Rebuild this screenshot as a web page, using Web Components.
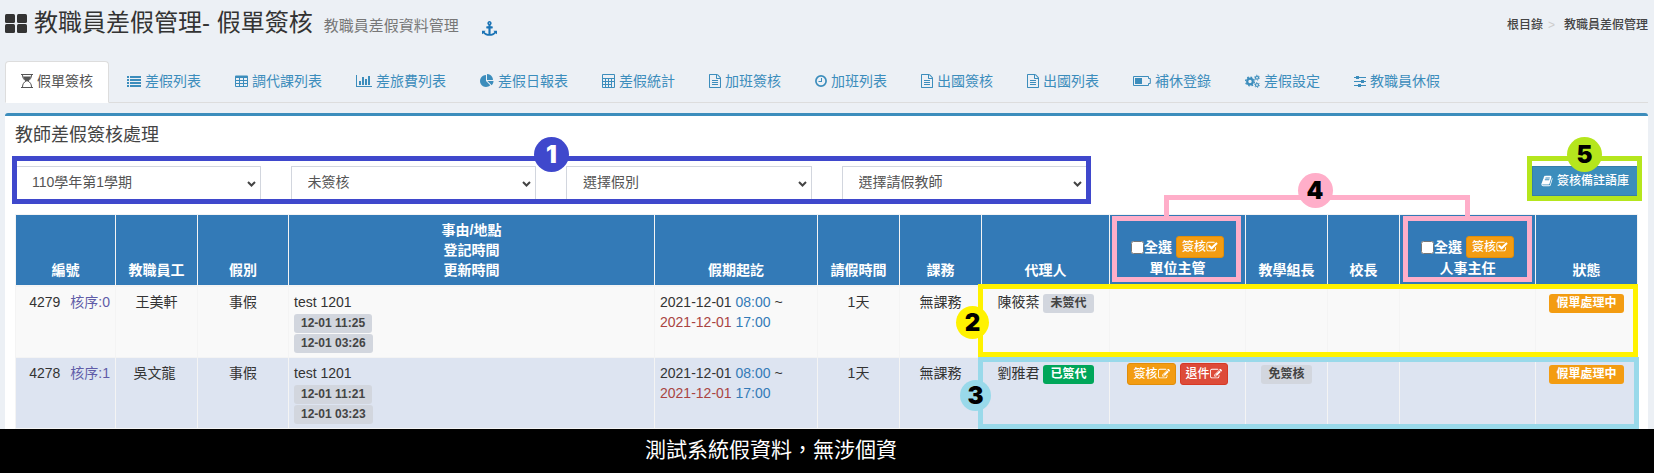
<!DOCTYPE html>
<html lang="zh-Hant">
<head>
<meta charset="utf-8">
<title>教職員差假管理 - 假單簽核</title>
<style>
  html, body { margin: 0; }
  body {
    background: #ecf0f5;
    color: #333;
    font: 14px/20px "Liberation Sans", "Noto Sans CJK TC", sans-serif;
  }
</style>
</head>
<body>
<leave-app></leave-app>
<script>
const define = (name, html, setup) => {
  const template = document.createElement('template');
  template.innerHTML = html;
  customElements.define(name, class extends HTMLElement {
    connectedCallback() {
      if (this.shadowRoot) return;
      const root = this.attachShadow({ mode: 'open' });
      root.append(template.content.cloneNode(true));
      if (setup) setup(this, root);
    }
  });
};

/* name: [width, height, markup] */
const ICONS = {
  grid: [22, 19, '<rect width="10" height="9" rx="1.5"/><rect x="12" width="10" height="9" rx="1.5"/><rect y="10" width="10" height="9" rx="1.5"/><rect x="12" y="10" width="10" height="9" rx="1.5"/>'],
  anchor: [1792, 1792, '<path d="M960 256q0-26-19-45t-45-19-45 19-19 45 19 45 45 19 45-19 19-45zm832 928v352q0 22-20 30-8 2-12 2-12 0-23-9l-93-93q-119 143-318.5 226.5t-429.5 83.5-429.5-83.5-318.5-226.5l-93 93q-9 9-23 9-4 0-12-2-20-8-20-30v-352q0-14 9-23t23-9h352q22 0 30 20 8 19-7 35l-100 100q67 91 189.5 153.5t271.5 82.5v-647h-192q-26 0-45-19t-19-45v-128q0-26 19-45t45-19h192v-163q-58-34-93-92.5t-35-128.5q0-106 75-181t181-75 181 75 75 181q0 70-35 128.5t-93 92.5v163h192q26 0 45 19t19 45v128q0 26-19 45t-45 19h-192v647q149-20 271.5-82.5t189.5-153.5l-100-100q-15-16-7-35 8-20 30-20h352q14 0 23 9t9 23z"/>'],
  hourglass: [12, 14, '<path d="M0 0h12v1H0zM0 13h12v1H0z"/><path d="M1.500 1c0 3 1.500 4.800 3.500 6c-2 1.200-3.500 3-3.500 6M10.500 1c0 3-1.500 4.800-3.500 6c2 1.200 3.500 3 3.500 6" fill="none" stroke="currentColor"/><path d="M2 2.500h8C9.400 4.500 8 6 6.500 7.500h-1C4 6 2.600 4.500 2 2.500z"/>'],
  list: [14, 14, '<path d="M0 2h2v2H0zM3 2h11v2H3zM0 5h2v2H0zM3 5h11v2H3zM0 8h2v2H0zM3 8h11v2H3zM0 11h2v2H0zM3 11h11v2H3z"/>'],
  table: [13, 14, '<path fill-rule="evenodd" d="M1 1.500h11a1 1 0 0 1 1 1V12a1 1 0 0 1-1 1H1a1 1 0 0 1-1-1V2.500a1 1 0 0 1 1-1zM1 4v2h3V4zM5 4v2h3V4zM9 4v2h3V4zM1 7v2h3V7zM5 7v2h3V7zM9 7v2h3V7zM1 10v2h3v-2zM5 10v2h3v-2zM9 10v2h3v-2z"/>'],
  chart: [16, 14, '<path d="M0 1h1v11h15v1H0zM3 7h2v4H3zM6 3h2v8H6zM9 5h2v6H9zM12 2h2v9h-2z"/>'],
  pie: [14, 14, '<path transform="scale(.0078125)" d="M768 890l546 546q-106 108-247.500 168t-298.500 60q-209 0-385.500-103t-279.500-279.500-103-385.500 103-385.500 279.500-279.500 385.500-103v762zm187 6h773q0 157-60 298.500t-168 247.500zm709-128h-768v-768q209 0 385.500 103t279.500 279.500 103 385.500z"/>'],
  calculator: [13, 14, '<path fill-rule="evenodd" d="M1 0h11a1 1 0 0 1 1 1v12a1 1 0 0 1-1 1H1a1 1 0 0 1-1-1V1a1 1 0 0 1 1-1zM1 1v3h11V1zM1 5v2h2V5zM4 5v2h2V5zM7 5v2h2V5zM10 5v2h2V5zM1 8v2h2V8zM4 8v2h2V8zM7 8v2h2V8zM10 8v5h2V8zM1 11v2h2v-2zM4 11v2h2v-2zM7 11v2h2v-2z"/>'],
  file: [12, 14, '<path transform="scale(.0078125) translate(-128)" d="M1596 380q28 28 48 76t20 88v1152q0 40-28 68t-68 28h-1344q-40 0-68-28t-28-68v-1600q0-40 28-68t68-28h896q40 0 88 20t76 48zm-444-244v376h376q-10-29-22-41l-313-313q-12-12-41-22zm384 1528v-1024h-416q-40 0-68-28t-28-68v-416h-768v1536h1280zm-1024-864q0-14 9-23t23-9h704q14 0 23 9t9 23v64q0 14-9 23t-23 9h-704q-14 0-23-9t-9-23v-64zm736 224q14 0 23 9t9 23v64q0 14-9 23t-23 9h-704q-14 0-23-9t-9-23v-64q0-14 9-23t23-9h704zm0 256q14 0 23 9t9 23v64q0 14-9 23t-23 9h-704q-14 0-23-9t-9-23v-64q0-14 9-23t23-9h704z"/>'],
  clock: [12, 14, '<circle cx="6" cy="7" r="5.100" fill="none" stroke="currentColor" stroke-width="1.700"/><path d="M6 4h1v4H3.500V7H6z"/>'],
  battery: [18, 14, '<path d="M.5 2.500h15v2h1.800v5h-1.800v2H.5z" fill="none" stroke="currentColor"/><path d="M2 4h7v6H2z"/>'],
  cogs: [15, 14, '<circle cx="5" cy="7.500" r="2.800" fill="none" stroke="currentColor" stroke-width="2.200"/><circle cx="5" cy="7.500" r="4.400" fill="none" stroke="currentColor" stroke-width="1.300" stroke-dasharray="1.730 1.726"/><circle cx="12" cy="3.700" r="1.500" fill="none" stroke="currentColor" stroke-width="1.200"/><circle cx="12" cy="3.700" r="2.500" fill="none" stroke="currentColor" stroke-width=".8" stroke-dasharray="1.200 1.420"/><circle cx="12" cy="11" r="1.500" fill="none" stroke="currentColor" stroke-width="1.200"/><circle cx="12" cy="11" r="2.500" fill="none" stroke="currentColor" stroke-width=".8" stroke-dasharray="1.200 1.420"/>'],
  sliders: [12, 14, '<path d="M0 3h12v1H0zM0 7h12v1H0zM0 11h12v1H0zM2 2h3v3H2zM7 6h3v3H7zM4 10h3v3H4z"/>'],
  book: [1792, 1792, '<path d="M1703 478q40 57 18 129l-275 906q-19 64-76.500 107.500t-122.500 43.500h-923q-77 0-148.500-53.500t-99.500-131.500q-24-67-2-127 0-4 3-27t4-37q1-8-3-21.500t-3-19.500q2-11 8-21t16.500-23.500 16.500-23.500q23-38 45-91.500t30-91.500q3-10 .5-30t-.5-28q3-11 17-28t17-23q21-36 42-92t25-90q1-9-2.500-32t.5-28q4-13 22-30.500t22-22.500q19-26 42.500-84.500t27.500-96.500q1-8-3-25.500t-2-26.500q2-8 9-18t18-23 17-21q8-12 16.500-30.500t15-35 16-36 19.500-32 26.500-23.500 36-11.500 47.500 5.500l-1 3q38-9 51-9h761q74 0 114 56t18 130l-274 906q-36 119-71.500 153.500t-128.500 34.500h-869q-27 0-38 15-11 16-1 43 24 70 144 70h923q29 0 56-15.500t35-41.500l300-987q7-22 5-57 38 15 59 43zm-1064 2q-4 13 2 22.500t20 9.500h608q13 0 25.500-9.500t16.500-22.500l21-64q4-13-2-22.500t-20-9.500h-608q-13 0-25.500 9.500t-16.500 22.500zm-83 256q-4 13 2 22.500t20 9.500h608q13 0 25.500-9.500t16.500-22.500l21-64q4-13-2-22.500t-20-9.500h-608q-13 0-25.500 9.500t-16.500 22.500z"/>'],
  check: [1664, 1792, '<path transform="translate(-64)" d="M1472 930v318q0 119-84.500 203.500t-203.500 84.500h-832q-119 0-203.500-84.500t-84.500-203.500v-832q0-119 84.500-203.500t203.500-84.500h832q63 0 117 25 15 7 18 23 3 17-9 29l-49 49q-10 10-23 10-3 0-9-2-23-6-45-6h-832q-66 0-113 47t-47 113v832q0 66 47 113t113 47h832q66 0 113-47t47-113v-254q0-13 9-22l64-64q10-10 23-10 6 0 12 3 20 8 20 29zm231-489l-814 814q-24 24-57 24t-57-24l-430-430q-24-24-24-57t24-57l110-110q24-24 57-24t57 24l263 263 647-647q24-24 57-24t57 24l110 110q24 24 24 57t-24 57z"/>'],
  edit: [1792, 1792, '<path d="M888 1184l116-116-152-152-116 116v56h96v96h56zm440-720q-16-16-33 1l-350 350q-17 17-1 33t33-1l350-350q17-17 1-33zm80 594v190q0 119-84.500 203.500t-203.500 84.500h-832q-119 0-203.500-84.500t-84.500-203.500v-832q0-119 84.500-203.500t203.500-84.500h832q63 0 117 25 15 7 18 23 3 17-9 29l-49 49q-14 14-32 8-23-6-45-6h-832q-66 0-113 47t-47 113v832q0 66 47 113t113 47h832q66 0 113-47t47-113v-126q0-13 9-22l64-64q15-15 35-7t20 29zm-96-738l288 288-672 672h-288v-288zm444 132l-92 92-288-288 92-92q28-28 68-28t68 28l152 152q28 28 28 68t-28 68z"/>'],
  chevron: [9, 6, '<path d="M1 1l3.500 3.500L8 1" fill="none" stroke="currentColor" stroke-width="2"/>']
};

define('ui-icon', `
  <style>
    :host { display: inline-block; flex: none; width: 14px; height: 14px; }
    svg { display: block; width: 100%; height: 100%; fill: currentColor; }
  </style>
  <svg aria-hidden="true"></svg>`, (el, root) => {
  const [w, h, markup] = ICONS[el.getAttribute('name')];
  const svg = root.querySelector('svg');
  svg.setAttribute('viewBox', `0 0 ${w} ${h}`);
  svg.innerHTML = markup;
  if (h === 14) el.style.width = w + 'px';
});

/* Numbered round marker; its colours come from the frame it belongs to. */
define('callout-dot', `
  <style>
    :host {
      display: grid; place-items: center; box-sizing: border-box;
      width: var(--dot, 35px); height: var(--dot, 35px); border-radius: 50%;
      background: var(--mark); color: var(--ink, #000);
      font: 900 24px/24px Inter, "Liberation Sans", sans-serif;
    }
  </style>
  <slot></slot>`);

define('callout-frame', `
  <style>
    :host { display: block; position: absolute; box-sizing: border-box; border: 5px solid var(--mark); pointer-events: none; }
  </style>
  <slot></slot>`);

define('ui-tag', `
  <style>
    :host {
      display: inline-block; height: 19px; padding: 0 7px; border-radius: 3px; box-sizing: border-box;
      background: #d2d6de; color: #444; font-size: 12px; line-height: 18px; font-weight: 700; vertical-align: top; margin-top: 2px;
    }
    :host([tone="success"]) { background: #00a65a; color: #fff; }
    :host([tone="warning"]) { background: #f39c12; color: #fff; }
  </style>
  <slot></slot>`);

define('ui-button', `
  <style>
    :host { display: inline-block; vertical-align: top; }
    button {
      display: flex; align-items: center; box-sizing: border-box; width: 100%; height: 22px; margin: 0; padding: 0 5px;
      border: 1px solid #e08e0b; border-radius: 3px; background: #f39c12; color: #fff;
      font: 500 12px/18px "Liberation Sans", "Noto Sans CJK TC", sans-serif; white-space: nowrap;
    }
    :host([tone="danger"]) button { background: #dd4b39; border-color: #d73925; }
    :host([tone="primary"]) button { height: 30px; padding: 0 8px; gap: 4px; background: #3c8dbc; border-color: #367fa9; border-radius: 0; }
    ::slotted(ui-icon) { width: 12px; height: 12px; }
  </style>
  <button type="button"><slot></slot></button>`);

define('page-heading', `
  <style>
    :host { display: flex; justify-content: space-between; align-items: center; height: 46px; padding-bottom: 15px; }
    .title { display: flex; align-items: center; }
    .title ui-icon { width: 22px; height: 19px; }
    h1 { margin: 0 0 0 7px; font-size: 24px; line-height: 28px; font-weight: 400; }
    small { margin-left: 11px; padding-top: 6px; font-size: 15px; line-height: 20px; color: #777; }
    a { text-decoration: none; color: #444; }
    .title .anchor { display: flex; margin-left: 23px; padding-top: 10px; color: #1a73b5; }
    .title .anchor ui-icon { width: 15px; height: 15px; }
    nav { display: flex; align-items: center; padding-top: 4px; font-size: 12px; font-weight: 500; }
    nav span { margin: 0 9px 0 5px; color: #ccc; }
  </style>
  <div class="title">
    <ui-icon name="grid"></ui-icon>
    <h1>教職員差假管理- 假單簽核</h1>
    <small>教職員差假資料管理</small>
    <a class="anchor" href="#" aria-label="釘選"><ui-icon name="anchor"></ui-icon></a>
  </div>
  <nav><a href="#">根目錄</a><span>&gt;</span><a href="#">教職員差假管理</a></nav>`);

define('tab-link', `
  <style>
    :host { display: block; margin: 0 2px -1px 0; }
    a {
      display: flex; align-items: center; gap: 4px; padding: 9px 15px 11px; border: 1px solid transparent;
      border-radius: 4px 4px 0 0; color: #3c8dbc; text-decoration: none; white-space: nowrap;
    }
    :host([active]) a { color: #555; background: #fff; border-color: #ddd #ddd #fff; }
  </style>
  <a href="#"><slot></slot></a>`, (el, root) => {
  const icon = document.createElement('ui-icon');
  icon.setAttribute('name', el.getAttribute('icon'));
  root.querySelector('a').prepend(icon);
});

define('tab-bar', `
  <style>:host { display: flex; border-bottom: 1px solid #ddd; }</style>
  <slot></slot>`);

define('filter-select', `
  <style>
    :host { display: block; position: relative; color: #444; }
    select {
      display: block; appearance: none; box-sizing: border-box; width: 100%; height: 34px; padding: 5px 28px 7px 16px;
      border: 1px solid #d2d6de; border-radius: 0; background: #fff; color: #555;
      font: 14px/20px "Liberation Sans", "Noto Sans CJK TC", sans-serif;
    }
    ui-icon { position: absolute; right: 5px; top: 15px; width: 9px; height: 6px; pointer-events: none; }
  </style>
  <select><option></option></select><ui-icon name="chevron"></ui-icon>`, (el, root) => {
  root.querySelector('option').textContent = el.getAttribute('value');
  root.querySelector('select').setAttribute('aria-label', el.getAttribute('label'));
});

define('filter-row', `
  <style>
    :host { display: grid; grid-template-columns: repeat(6, 1fr); gap: 30px; }
    .filters { grid-column: span 4; position: relative; display: grid; grid-template-columns: repeat(4, 1fr); gap: 30px; --mark: #3f48cc; --ink: #fff; }
    .filters callout-frame { inset: -10px -4px -4px -3px; }
    .phrases { grid-column: 6; justify-self: end; align-self: start; position: relative; --mark: #b5e61d; }
    .phrases callout-frame { inset: -10px -4px -5px -5px; }
    callout-frame { display: flex; justify-content: center; align-items: flex-start; }
    callout-dot { margin-top: -24px; }
  </style>
  <div class="filters">
    <filter-select label="學期" value="110學年第1學期"></filter-select>
    <filter-select label="簽核狀態" value="未簽核"></filter-select>
    <filter-select label="假別" value="選擇假別"></filter-select>
    <filter-select label="請假教師" value="選擇請假教師"></filter-select>
    <callout-frame><callout-dot>1</callout-dot></callout-frame>
  </div>
  <div class="phrases">
    <ui-button tone="primary"><ui-icon name="book"></ui-icon>簽核備註語庫</ui-button>
    <callout-frame><callout-dot>5</callout-dot></callout-frame>
  </div>`);

define('leave-table', `
  <style>
    :host { display: block; position: relative; }
    table { width: 100%; table-layout: fixed; border-collapse: collapse; }
    th, td { padding: 5px; border: 1px solid #f4f4f4; text-align: center; white-space: nowrap; line-height: 20px; }
    th { background: #337ab7; color: #fff; vertical-align: bottom; border-bottom-width: 2px; }
    th.batch { padding-bottom: 7px; }
    td { vertical-align: top; }
    tbody tr:nth-child(1) { background: #f9f9f9; }
    tbody tr:nth-child(2) { background: #dde4f1; }
    .start { text-align: left; }
    .end { text-align: right; }
    .order { margin-left: 10px; color: #605ca8; }
    .time { color: #337ab7; }
    .due { color: #a94442; }
    .pick { display: flex; justify-content: center; align-items: center; height: 22px; }
    .pick label { display: flex; align-items: center; margin-right: 4px; }
    .pick input { width: 13px; height: 13px; margin: 0; }
    .stamp { display: block; height: 20px; }
    .who { display: flex; justify-content: center; gap: 4px; }
    .acts { display: flex; justify-content: center; gap: 4px; height: 20px; }

    .approver { top: 2px; width: 129px; height: 66px; --mark: #ffaec9; }
    .unit { right: 397px; }
    .staff { right: 106px; }
    .bridge { top: -19px; right: 168px; width: 306px; height: 22px; border-bottom: 0; --mark: #ffaec9; display: flex; justify-content: center; align-items: flex-start; }
    .bridge callout-dot { margin: -27px 4px 0 0; }
    .first { top: 70px; right: 0; width: 660px; height: 73px; --mark: #fff200; --dot: 33px; }
    .second { bottom: 0; right: -1px; width: 661px; height: 72px; --mark: #99d9ea; --dot: 31px; }
    .first callout-dot { margin: 17px 0 0 -27px; }
    .second callout-dot { margin: 18px 0 0 -23px; }
  </style>
  <table>
    <colgroup>
      <col style="width:100px"><col style="width:82px"><col style="width:91px"><col>
      <col style="width:163px"><col style="width:82px"><col style="width:82px"><col style="width:128px">
      <col style="width:136px"><col style="width:82px"><col style="width:72px"><col style="width:136px"><col style="width:102px">
    </colgroup>
    <thead>
      <tr>
        <th>編號</th><th>教職員工</th><th>假別</th>
        <th>事由/地點<br>登記時間<br>更新時間</th>
        <th>假期起訖</th><th>請假時間</th><th>課務</th><th>代理人</th>
        <th class="batch"><div class="pick"><label><input type="checkbox">全選</label><ui-button>簽核<ui-icon name="check"></ui-icon></ui-button></div>單位主管</th>
        <th>教學組長</th><th>校長</th>
        <th class="batch"><div class="pick"><label><input type="checkbox">全選</label><ui-button>簽核<ui-icon name="check"></ui-icon></ui-button></div>人事主任</th>
        <th>狀態</th>
      </tr>
    </thead>
    <tbody>
      <tr>
        <td class="end">4279<span class="order">核序:0</span></td><td>王美軒</td><td>事假</td>
        <td class="start">test 1201<span class="stamp"><ui-tag>12-01 11:25</ui-tag></span><span class="stamp"><ui-tag>12-01 03:26</ui-tag></span></td>
        <td class="start">2021-12-01 <span class="time">08:00</span> ~<br><span class="due">2021-12-01</span> <span class="time">17:00</span></td>
        <td>1天</td><td>無課務</td>
        <td><div class="who">陳筱棻<ui-tag>未簽代</ui-tag></div></td>
        <td></td><td></td><td></td><td></td>
        <td><ui-tag tone="warning">假單處理中</ui-tag></td>
      </tr>
      <tr>
        <td class="end">4278<span class="order">核序:1</span></td><td>吳文龍&nbsp;</td><td>事假</td>
        <td class="start">test 1201<span class="stamp"><ui-tag>12-01 11:21</ui-tag></span><span class="stamp"><ui-tag>12-01 03:23</ui-tag></span></td>
        <td class="start">2021-12-01 <span class="time">08:00</span> ~<br><span class="due">2021-12-01</span> <span class="time">17:00</span></td>
        <td>1天</td><td>無課務</td>
        <td><div class="who">劉雅君<ui-tag tone="success">已簽代</ui-tag></div></td>
        <td><div class="acts"><ui-button>簽核<ui-icon name="edit"></ui-icon></ui-button><ui-button tone="danger">退件<ui-icon name="edit"></ui-icon></ui-button></div></td>
        <td><ui-tag>免簽核</ui-tag></td><td></td><td></td>
        <td><ui-tag tone="warning">假單處理中</ui-tag></td>
      </tr>
    </tbody>
  </table>
  <callout-frame class="approver unit"></callout-frame>
  <callout-frame class="approver staff"></callout-frame>
  <callout-frame class="bridge"><callout-dot>4</callout-dot></callout-frame>
  <callout-frame class="first"><callout-dot>2</callout-dot></callout-frame>
  <callout-frame class="second"><callout-dot>3</callout-dot></callout-frame>`);

define('content-box', `
  <style>
    :host { display: block; margin-top: 10px; padding: 9px 10px 0; border-top: 3px solid #3c8dbc; border-radius: 3px 3px 0 0; background: #fff; }
    h2 { margin: 0; font-size: 18px; line-height: 20px; font-weight: 400; color: #444; }
    filter-row { margin: 21px 0 14px; }
  </style>
  <h2>教師差假簽核處理</h2>
  <filter-row></filter-row>
  <leave-table></leave-table>`);

define('notice-bar', `
  <style>
    :host { display: block; flex: 1; box-sizing: border-box; padding: 7px 0 8px 39%; background: #000; color: #fff; font-size: 21px; line-height: 27px; }
  </style>
  <slot></slot>`);

define('leave-app', `
  <style>
    :host { display: flex; flex-direction: column; min-height: 100vh; }
    main { padding: 0 6px 0 5px; }
  </style>
  <main>
    <page-heading></page-heading>
    <tab-bar>
      <tab-link icon="hourglass" active>假單簽核</tab-link>
      <tab-link icon="list">差假列表</tab-link>
      <tab-link icon="table">調代課列表</tab-link>
      <tab-link icon="chart">差旅費列表</tab-link>
      <tab-link icon="pie">差假日報表</tab-link>
      <tab-link icon="calculator">差假統計</tab-link>
      <tab-link icon="file">加班簽核</tab-link>
      <tab-link icon="clock">加班列表</tab-link>
      <tab-link icon="file">出國簽核</tab-link>
      <tab-link icon="file">出國列表</tab-link>
      <tab-link icon="battery">補休登錄</tab-link>
      <tab-link icon="cogs">差假設定</tab-link>
      <tab-link icon="sliders">教職員休假</tab-link>
    </tab-bar>
    <content-box></content-box>
  </main>
  <notice-bar>測試系統假資料，無涉個資</notice-bar>`);
</script>
</body>
</html>
